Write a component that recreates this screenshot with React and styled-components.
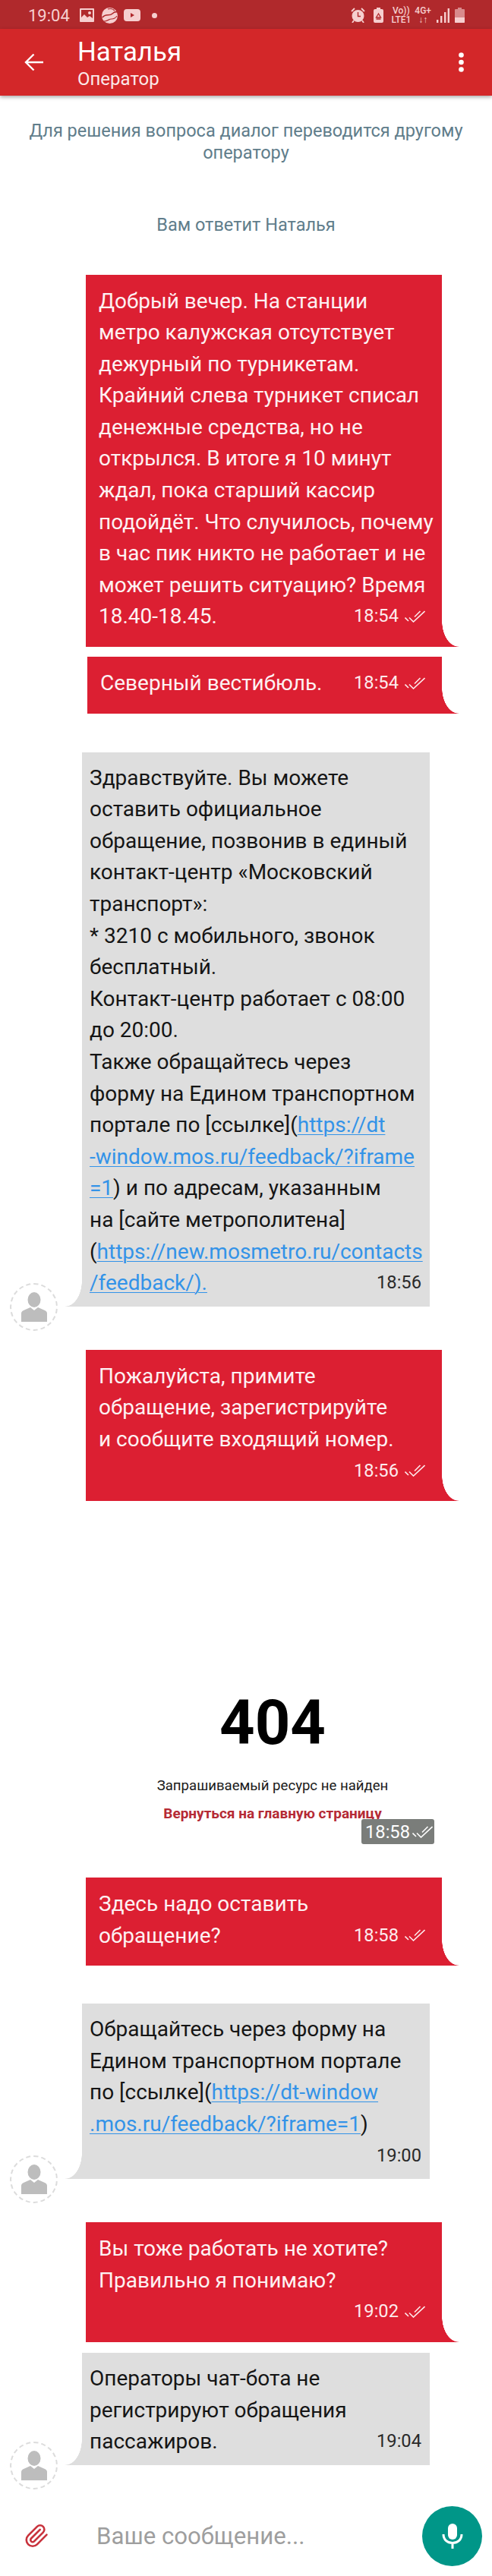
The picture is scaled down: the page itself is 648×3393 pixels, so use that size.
import React from "react";
import styled, { createGlobalStyle } from "styled-components";

const Global = createGlobalStyle`
  html, body { margin: 0; padding: 0; background: #fff; }
  body { font-family: Roboto, "Noto Sans", sans-serif; }
`;

const RED = "#dc1f32";
const GREY = "#dedede";

const Page = styled.div`
  width: 648px;
  height: 3393px;
  overflow: hidden;
  display: flex;
  flex-direction: column;
  background: #fff;
`;

const StatusBar = styled.div`
  height: 38px;
  flex: none;
  background: #b0292c;
  color: #f6cfcf;
  display: flex;
  align-items: center;
  justify-content: space-between;
  padding: 2px 36px 0 37px;
  box-sizing: border-box;
`;
const StatusGroup = styled.div`
  display: flex;
  align-items: center;
`;
const StatusTime = styled.span`
  font-size: 22px;
  width: 68px;
  white-space: nowrap;
`;
const IconSlot = styled.span`
  display: flex;
  margin-left: ${(p) => p.$ml || 0}px;
`;
const Stacked = styled.span`
  display: flex;
  flex-direction: column;
  align-items: center;
  font-size: 12px;
  font-weight: 500;
  line-height: 12px;
  margin-left: ${(p) => p.$ml || 0}px;
  white-space: nowrap;
`;

const Header = styled.header`
  height: 88px;
  flex: none;
  background: #d32729;
  color: #fff;
  display: flex;
  align-items: center;
  padding: 0 37px 0 32px;
  box-sizing: border-box;
  box-shadow: 0 2px 5px rgba(0, 0, 0, 0.35);
  position: relative;
`;
const Titles = styled.div`
  margin-left: 45px;
  flex: 1;
  display: flex;
  flex-direction: column;
`;
const Title = styled.div`
  font-size: 34.8px;
  line-height: 40px;
  margin-top: 2px;
`;
const Subtitle = styled.div`
  font-size: 24px;
  line-height: 30px;
  margin-top: 1px;
  color: #fbe9e9;
`;

const Notice = styled.div`
  text-align: center;
  font-size: 23.5px;
  line-height: 28.5px;
  color: #607d8b;
  margin-top: ${(p) => p.$mt}px;
`;

const Row = styled.div`
  display: flex;
  align-items: flex-end;
  justify-content: ${(p) => (p.$in ? "flex-start" : "flex-end")};
  padding: ${(p) => (p.$in ? "0 0 0 13px" : "0 66px 0 0")};
  margin-top: ${(p) => p.$mt}px;
`;

const Bubble = styled.div`
  position: relative;
  box-sizing: border-box;
  width: ${(p) => p.$w}px;
  background: ${(p) => (p.$in ? GREY : RED)};
  color: ${(p) => (p.$in ? "#151515" : "#fdf1f2")};
  margin-left: ${(p) => (p.$in ? "32px" : "0")};
  padding: ${(p) => (p.$in ? "13px 11px 10px 10px" : "14px 22px 19px 17px")};
  font-size: 28px;
  line-height: 41.6px;
  white-space: nowrap;
  &::after {
    content: "";
    position: absolute;
    bottom: 0;
    width: 22px;
    height: 34px;
    ${(p) =>
      p.$in
        ? `left: -22px; background: radial-gradient(ellipse 22px 34px at 0 0, transparent 98%, ${GREY} 100%);`
        : `right: -22px; background: radial-gradient(ellipse 22px 34px at 100% 0, transparent 98%, ${RED} 100%);`}
  }
`;
const LastLine = styled.div`
  display: flex;
  justify-content: space-between;
  align-items: center;
`;
const Stamp = styled.span`
  margin-left: auto;
  display: flex;
  align-items: center;
  gap: 8px;
  font-size: 23.7px;
  line-height: 41.6px;
  color: ${(p) => (p.$in ? "#2a2a2a" : "#fdeaec")};
`;
const Link = styled.a`
  color: #3393e8;
  text-decoration: underline;
  text-decoration-thickness: 1px;
  text-underline-offset: 3px;
`;

const Avatar = styled.div`
  flex: none;
  width: 63px;
  height: 63px;
  box-sizing: border-box;
  border: 2px dashed #dcdcdc;
  border-radius: 50%;
  margin-bottom: -32px;
  display: flex;
  align-items: center;
  justify-content: center;
`;

const NotFound = styled.section`
  margin-top: 263px;
  padding-left: 70px;
  text-align: center;
  color: #000;
`;
const Code = styled.div`
  font-size: 81.3px;
  font-weight: 700;
  line-height: 60px;
`;
const NotFoundText = styled.div`
  margin-top: 40px;
  font-size: 18.6px;
  line-height: 24px;
  color: #1b1b1b;
`;
const HomeLink = styled.div`
  margin-top: 13px;
  font-size: 19px;
  font-weight: 700;
  line-height: 24px;
  color: #b52a35;
`;
const ChipRow = styled.div`
  display: flex;
  justify-content: flex-end;
  padding-right: 76px;
  margin-top: -5px;
`;
const Chip = styled.div`
  width: 96px;
  height: 33px;
  box-sizing: border-box;
  background: #7a7d7a;
  border-radius: 3px;
  color: #fff;
  font-size: 23.7px;
  display: flex;
  align-items: center;
  gap: 3px;
  padding-left: 5px;
`;

const InputBar = styled.div`
  margin-top: auto;
  height: 103px;
  flex: none;
  box-sizing: border-box;
  padding: 11px 13px 14px 32px;
  display: flex;
  align-items: center;
`;
const Placeholder = styled.div`
  margin-left: 62px;
  flex: 1;
  font-size: 31.2px;
  color: #9e9e9e;
  white-space: nowrap;
`;
const MicButton = styled.div`
  width: 79px;
  height: 79px;
  border-radius: 50%;
  background: #009688;
  display: flex;
  align-items: center;
  justify-content: center;
`;

const Ticks = ({ w = 27, h = 16, sw = 1.6 }) => (
  <svg width={w} height={h} viewBox="0 0 27 16" fill="none" stroke="currentColor" strokeWidth={sw}>
    <path d="M0.5 9.5L5 14" />
    <path d="M6 9.500L11.500 15L26.500 1" />
    <path d="M13 8.500L20.500 1" />
  </svg>
);

const Person = () => (
  <svg width="34" height="39" viewBox="0 0 34 39" fill="#bdbdbd">
    <ellipse cx="17" cy="10" rx="8.5" ry="10" />
    <path d="M12 20l5 4 5-4 9 4c2 1 3 2 3 4v11H0V28c0-2 1-3 3-4z" />
  </svg>
);

const In = ({ mt, w, children }) => (
  <Row $in $mt={mt}>
    <Avatar>
      <Person />
    </Avatar>
    <Bubble $in $w={w}>
      {children}
    </Bubble>
  </Row>
);

const Time = ({ t, out }) => (
  <Stamp $in={!out}>
    {t}
    {out && <Ticks />}
  </Stamp>
);

const Out = ({ mt, w, children }) => (
  <Row $mt={mt}>
    <Bubble $w={w}>{children}</Bubble>
  </Row>
);

export default function App() {
  return (
    <Page>
      <Global />
      <StatusBar>
        <StatusGroup>
          <StatusTime>19:04</StatusTime>
          <IconSlot>
            <svg width="19" height="18" viewBox="0 0 19 18">
              <path fill="#f6cfcf" fillRule="evenodd" d="M1 0h17a1 1 0 011 1v16a1 1 0 01-1 1H1a1 1 0 01-1-1V1a1 1 0 011-1zM2 2v10l4-4 4 4 3-2 4 3V2zM13 4a2 2 0 110 4 2 2 0 010-4z" />
            </svg>
          </IconSlot>
          <IconSlot $ml={10}>
            <svg width="21" height="21" viewBox="0 0 21 21">
              <circle cx="10.5" cy="10.5" r="10.5" fill="#f6cfcf" />
              <path d="M1 13C5 7 10 12 14 8c2-2 4-3 6-2" fill="none" stroke="#b0292c" strokeWidth="1.6" />
              <path d="M3 18c5 0 6-3 10-3 3 0 5-1 7-4" fill="none" stroke="#b0292c" strokeWidth="1.2" />
              <path d="M8 2c3-1 7 0 9 2" fill="none" stroke="#b0292c" strokeWidth="1.2" />
            </svg>
          </IconSlot>
          <IconSlot $ml={8}>
            <svg width="22" height="16" viewBox="0 0 22 16">
              <path fill="#f6cfcf" fillRule="evenodd" d="M4 0h14a4 4 0 014 4v8a4 4 0 01-4 4H4a4 4 0 01-4-4V4a4 4 0 014-4zM9 5v6l5-3z" />
            </svg>
          </IconSlot>
          <IconSlot $ml={15}>
            <svg width="7" height="7" viewBox="0 0 7 7">
              <circle cx="3.5" cy="3.5" r="3.5" fill="#f6cfcf" />
            </svg>
          </IconSlot>
        </StatusGroup>
        <StatusGroup>
          <IconSlot>
            <svg width="19" height="20" viewBox="0 0 19 20">
              <circle cx="9.5" cy="11" r="8" fill="#f6cfcf" />
              <path d="M9.5 6v5.5H13" fill="none" stroke="#b0292c" strokeWidth="1.4" />
              <path d="M1 5l4-4M18 5l-4-4M4 17l-2 3M15 17l2 3" stroke="#f6cfcf" strokeWidth="1.8" />
            </svg>
          </IconSlot>
          <IconSlot $ml={11}>
            <svg width="13" height="20" viewBox="0 0 13 20">
              <path fill="#f6cfcf" d="M4 0h5v2h2a2 2 0 012 2v14a2 2 0 01-2 2H2a2 2 0 01-2-2V4a2 2 0 012-2h2z" />
              <path d="M6.5 8l-3 5h6zM3.5 15h6" fill="none" stroke="#b0292c" strokeWidth="1.3" />
            </svg>
          </IconSlot>
          <Stacked $ml={10}>
            <span>Vo))</span>
            <span>LTE1</span>
          </Stacked>
          <Stacked $ml={5}>
            <span>4G+</span>
            <span>↓↑</span>
          </Stacked>
          <IconSlot $ml={7}>
            <svg width="17" height="19" viewBox="0 0 17 19" fill="#f6cfcf">
              <rect x="0" y="15" width="2.4" height="4" />
              <rect x="5" y="10" width="2.4" height="9" />
              <rect x="10" y="5" width="2.4" height="14" />
              <rect x="14.6" y="0" width="2.4" height="19" />
            </svg>
          </IconSlot>
          <IconSlot $ml={7}>
            <svg width="13" height="20" viewBox="0 0 13 20">
              <path fill="#d98a8c" d="M4 0h5v2h3a1 1 0 011 1v16a1 1 0 01-1 1H1a1 1 0 01-1-1V3a1 1 0 011-1h3z" />
              <path fill="#f6cfcf" d="M0 13h13v6a1 1 0 01-1 1H1a1 1 0 01-1-1z" />
            </svg>
          </IconSlot>
        </StatusGroup>
      </StatusBar>

      <Header>
        <svg width="25" height="24" viewBox="0 0 25 24" fill="none" stroke="#fff" strokeWidth="2.4">
          <path d="M25 12H2M12.5 1.5L2 12l10.5 10.5" />
        </svg>
        <Titles>
          <Title>Наталья</Title>
          <Subtitle>Оператор</Subtitle>
        </Titles>
        <svg width="7" height="26" viewBox="0 0 7 26" fill="#fff">
          <circle cx="3.5" cy="3.5" r="3.3" />
          <circle cx="3.5" cy="13" r="3.3" />
          <circle cx="3.5" cy="22.5" r="3.3" />
        </svg>
      </Header>

      <Notice $mt={32}>
        Для решения вопроса диалог переводится другому
        <br />
        оператору
      </Notice>
      <Notice $mt={67}>Вам ответит Наталья</Notice>

      <Out mt={51} w={469}>
        Добрый вечер. На станции
        <br />
        метро калужская отсутствует
        <br />
        дежурный по турникетам.
        <br />
        Крайний слева турникет списал
        <br />
        денежные средства, но не
        <br />
        открылся. В итоге я 10 минут
        <br />
        ждал, пока старший кассир
        <br />
        подойдёт. Что случилось, почему
        <br />
        в час пик никто не работает и не
        <br />
        может решить ситуацию? Время
        <LastLine>
          18.40-18.45.
          <Time t="18:54" out />
        </LastLine>
      </Out>
      <Out mt={13} w={467}>
        <LastLine>
          Северный вестибюль.
          <Time t="18:54" out />
        </LastLine>
      </Out>

      <In mt={51} w={458}>
        Здравствуйте. Вы можете
        <br />
        оставить официальное
        <br />
        обращение, позвонив в единый
        <br />
        контакт-центр «Московский
        <br />
        транспорт»:
        <br />
        * 3210 с мобильного, звонок
        <br />
        бесплатный.
        <br />
        Контакт-центр работает с 08:00
        <br />
        до 20:00.
        <br />
        Также обращайтесь через
        <br />
        форму на Едином транспортном
        <br />
        портале по [ссылке](<Link>https://dt</Link>
        <br />
        <Link>-window.mos.ru/feedback/?iframe</Link>
        <br />
        <Link>=1</Link>) и по адресам, указанным
        <br />
        на [сайте метрополитена]
        <br />
        (<Link>https://new.mosmetro.ru/contacts</Link>
        <LastLine>
          <Link>/feedback/).</Link>
          <Time t="18:56" />
        </LastLine>
      </In>

      <Out mt={57} w={469}>
        Пожалуйста, примите
        <br />
        обращение, зарегистрируйте
        <br />
        и сообщите входящий номер.
        <LastLine>
          <Time t="18:56" out />
        </LastLine>
      </Out>

      <NotFound>
        <Code>404</Code>
        <NotFoundText>Запрашиваемый ресурс не найден</NotFoundText>
        <HomeLink>Вернуться на главную страницу</HomeLink>
      </NotFound>
      <ChipRow>
        <Chip>
          18:58
          <Ticks w={27} h={16} sw={1.6} />
        </Chip>
      </ChipRow>

      <Out mt={44} w={469}>
        Здесь надо оставить
        <LastLine>
          обращение?
          <Time t="18:58" out />
        </LastLine>
      </Out>

      <In mt={50} w={458}>
        Обращайтесь через форму на
        <br />
        Едином транспортном портале
        <br />
        по [ссылке](<Link>https://dt-window</Link>
        <br />
        <Link>.mos.ru/feedback/?iframe=1</Link>)
        <LastLine>
          <Time t="19:00" />
        </LastLine>
      </In>

      <Out mt={57} w={469}>
        Вы тоже работать не хотите?
        <br />
        Правильно я понимаю?
        <LastLine>
          <Time t="19:02" out />
        </LastLine>
      </Out>

      <In mt={14} w={458}>
        Операторы чат-бота не
        <br />
        регистрируют обращения
        <LastLine>
          пассажиров.
          <Time t="19:04" />
        </LastLine>
      </In>

      <InputBar>
        <svg width="33" height="38" viewBox="0 0 24 24" fill="none" stroke="#c8323c" strokeWidth="1.9" strokeLinecap="round" strokeLinejoin="round">
          <path d="M21.44 11.05l-9.19 9.19a6 6 0 01-8.49-8.49l8.57-8.57A4 4 0 1118 8.84l-8.59 8.57a2 2 0 01-2.83-2.83l8.49-8.48" />
        </svg>
        <Placeholder>Ваше сообщение...</Placeholder>
        <MicButton>
          <svg width="28" height="34" viewBox="0 0 28 34" fill="none" stroke="#fff" strokeWidth="3">
            <rect x="8" y="1" width="12" height="21" rx="6" fill="#fff" stroke="none" />
            <path d="M2 15c0 7 5 11.500 12 11.500S26 22 26 15M14 26v8" />
          </svg>
        </MicButton>
      </InputBar>
    </Page>
  );
}
